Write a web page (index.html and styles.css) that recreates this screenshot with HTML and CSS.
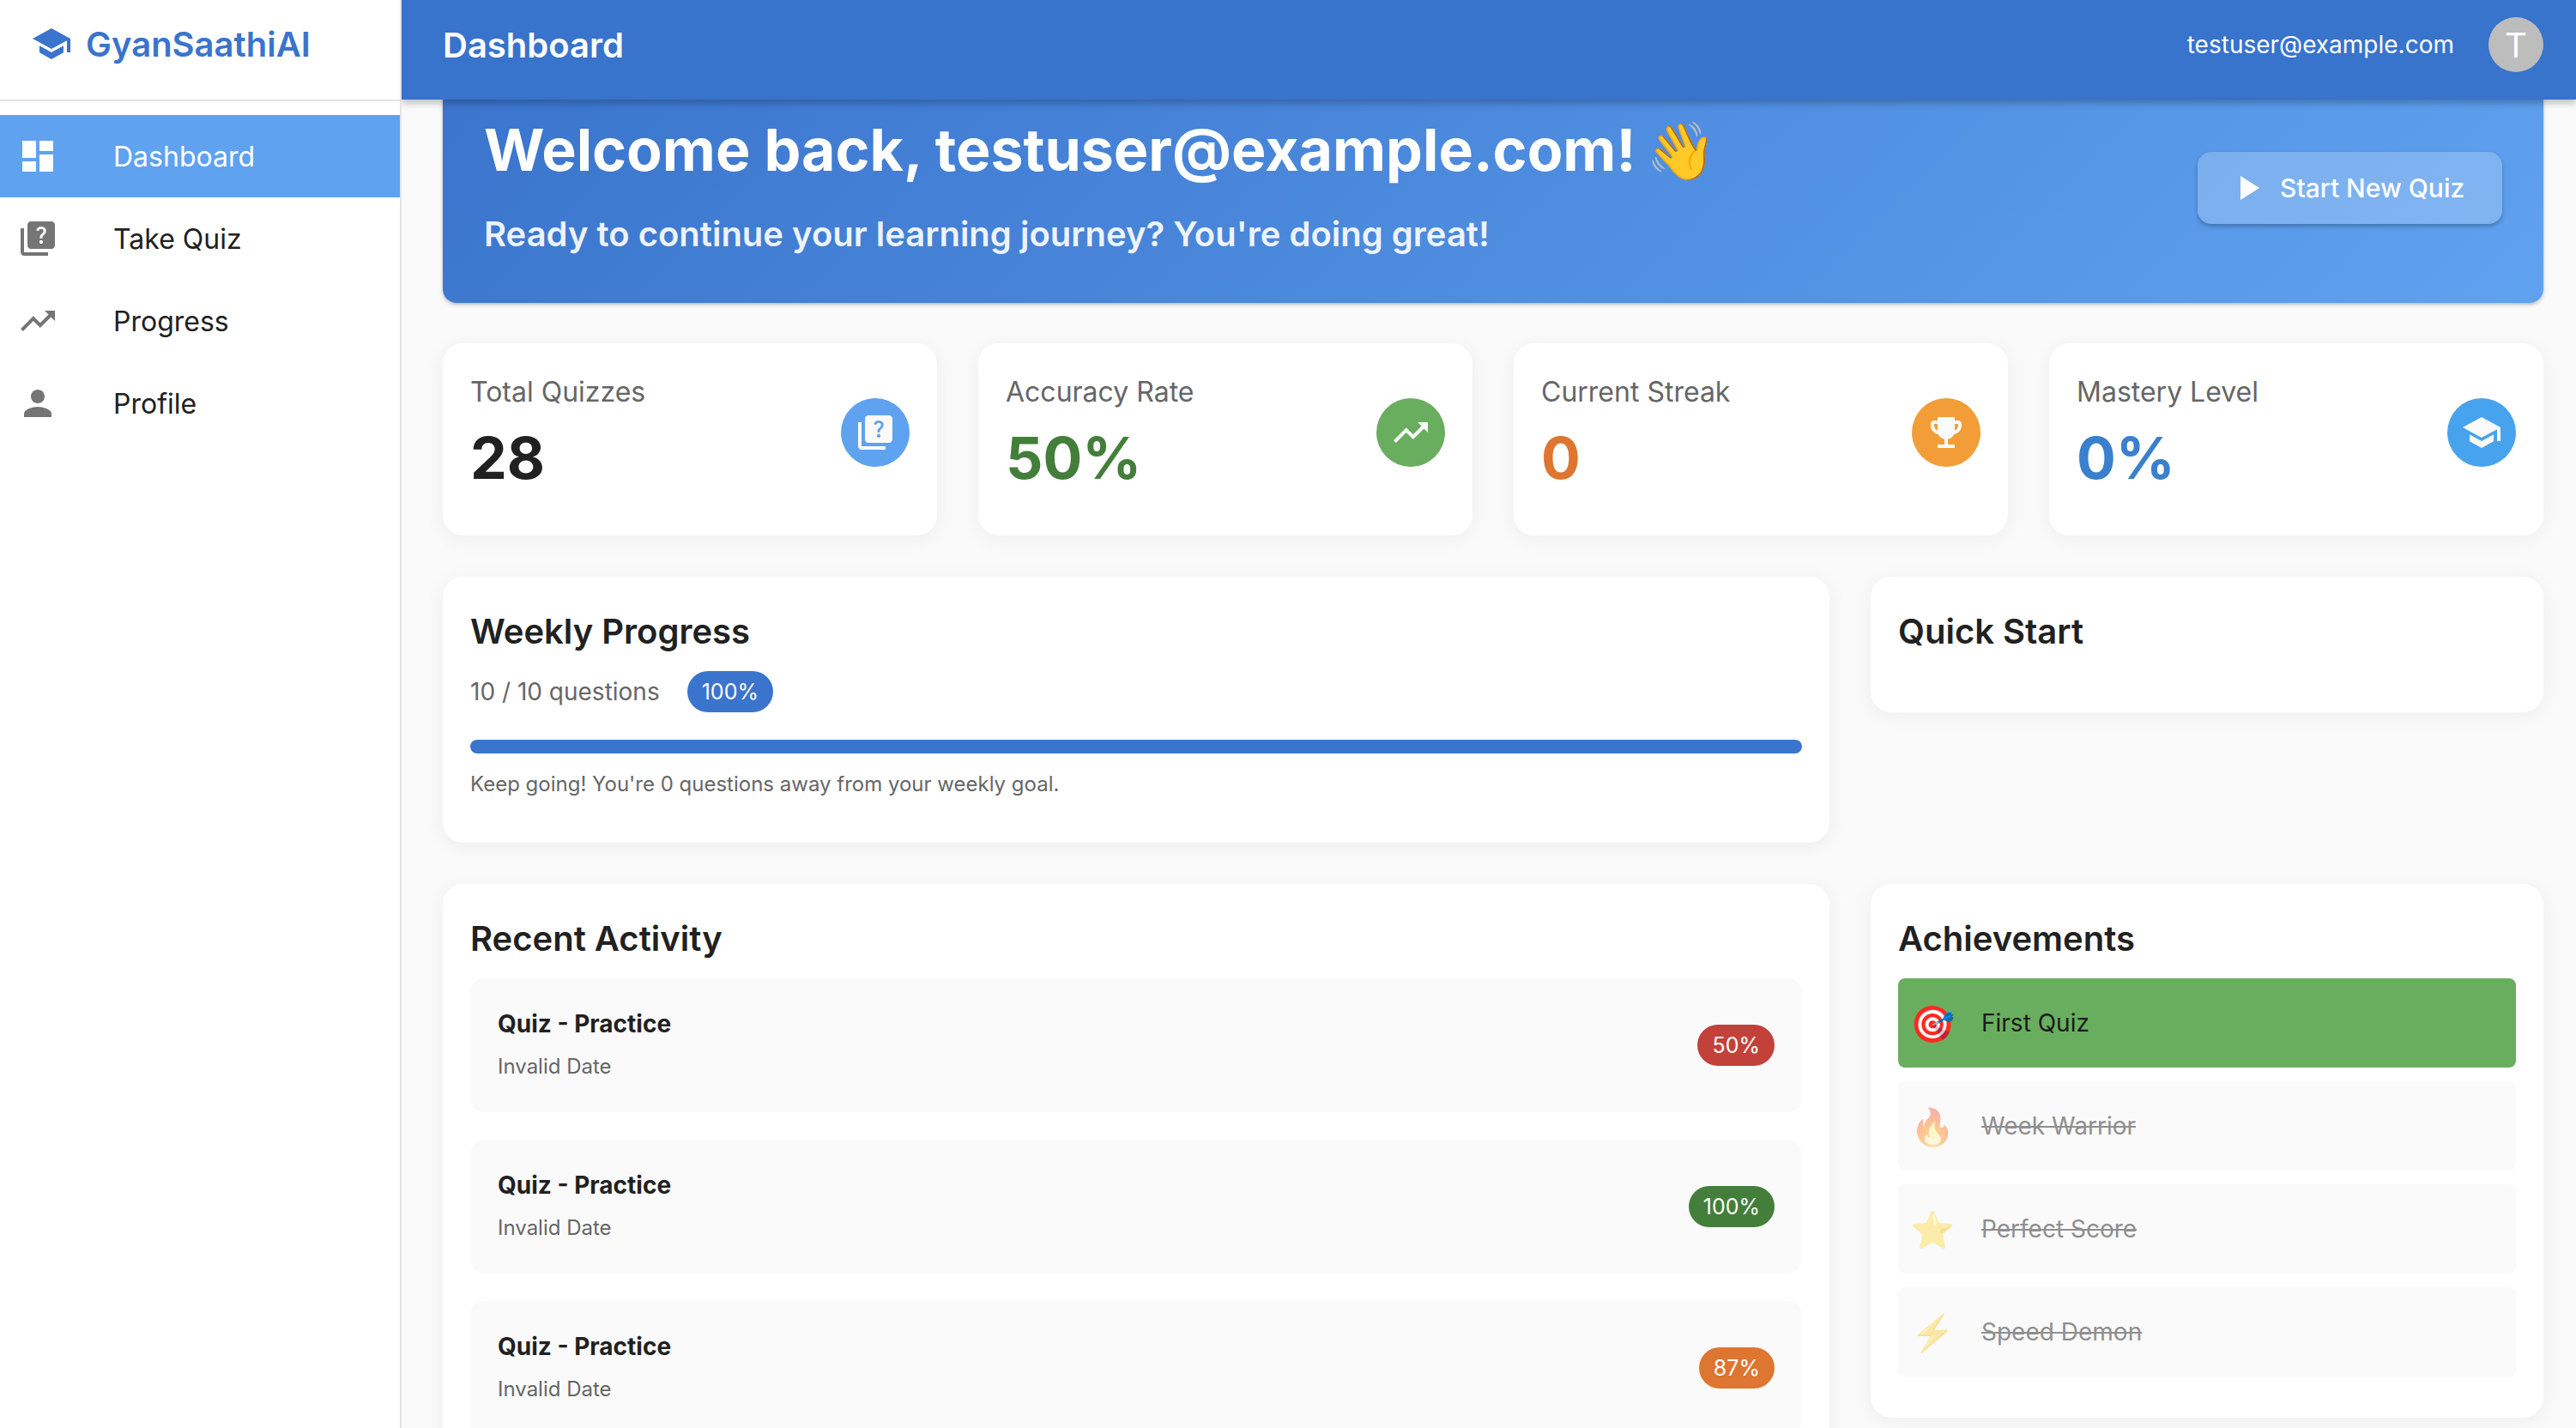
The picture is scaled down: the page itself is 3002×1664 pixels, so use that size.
FILE: index.html
```html
<!DOCTYPE html>
<html lang="en">
<head>
<meta charset="utf-8">
<title>GyanSaathiAI</title>
<link rel="stylesheet" href="styles.css">
</head>
<body>
<svg class="defs" width="0" height="0" aria-hidden="true">
  <defs>
    <symbol id="i-school" viewBox="0 0 24 24"><path d="M5 13.18v4L12 21l7-3.82v-4L12 17l-7-3.82zM12 3 1 9l11 6 9-4.91V17h2V9L12 3z"/></symbol>
    <symbol id="i-dash" viewBox="0 0 24 24"><path d="M3 13h8V3H3v10zm0 8h8v-6H3v6zm10 0h8V11h-8v10zm0-18v6h8V3h-8z"/></symbol>
    <symbol id="i-quiz" viewBox="0 0 24 24"><path d="M4 6H2v14c0 1.1.9 2 2 2h14v-2H4V6zm16-4H8c-1.1 0-2 .9-2 2v12c0 1.1.9 2 2 2h12c1.1 0 2-.9 2-2V4c0-1.1-.9-2-2-2zm-5.99 13c-.59 0-1.05-.47-1.05-1.05 0-.59.47-1.04 1.05-1.04.59 0 1.04.45 1.04 1.04-.01.58-.45 1.05-1.04 1.05zm2.5-6.17c-.63.93-1.23 1.21-1.56 1.81-.13.24-.18.4-.18 1.18h-1.52c0-.41-.06-1.08.26-1.65.41-.73 1.18-1.16 1.63-1.8.48-.68.21-1.94-1.14-1.94-.88 0-1.32.67-1.5 1.23l-1.37-.57C11.51 5.96 12.52 5 13.99 5c1.23 0 2.08.56 2.51 1.26.37.61.58 1.73.01 2.57z"/></symbol>
    <symbol id="i-trend" viewBox="0 0 24 24"><path d="M16 6l2.29 2.29-4.88 4.88-4-4L2 16.59 3.41 18l6-6 4 4 6.3-6.29L22 12V6z"/></symbol>
    <symbol id="i-person" viewBox="0 0 24 24"><path d="M12 12c2.21 0 4-1.79 4-4s-1.79-4-4-4-4 1.79-4 4 1.79 4 4 4zm0 2c-2.67 0-8 1.34-8 4v2h16v-2c0-2.66-5.33-4-8-4z"/></symbol>
    <symbol id="i-trophy" viewBox="0 0 24 24"><path d="M19 5h-2V3H7v2H5c-1.1 0-2 .9-2 2v1c0 2.55 1.92 4.63 4.39 4.94.63 1.5 1.98 2.63 3.61 2.96V19H7v2h10v-2h-4v-3.1c1.63-.33 2.98-1.46 3.61-2.96C19.08 12.63 21 10.55 21 8V7c0-1.1-.9-2-2-2zM5 8V7h2v3.82C5.84 10.4 5 9.3 5 8zm14 0c0 1.3-.84 2.4-2 2.82V7h2v1z"/></symbol>
    <symbol id="i-play" viewBox="0 0 24 24"><path d="M8 5v14l11-7z"/></symbol>
  </defs>
</svg>
<div class="app">
  <aside class="sidebar">
    <div class="brand">
      <svg class="icon brand-icon"><use href="#i-school"/></svg>
      <span class="brand-name">GyanSaathiAI</span>
    </div>
    <nav class="nav">
      <a class="nav-item active"><svg class="icon"><use href="#i-dash"/></svg><span>Dashboard</span></a>
      <a class="nav-item"><svg class="icon"><use href="#i-quiz"/></svg><span>Take Quiz</span></a>
      <a class="nav-item"><svg class="icon"><use href="#i-trend"/></svg><span>Progress</span></a>
      <a class="nav-item"><svg class="icon"><use href="#i-person"/></svg><span>Profile</span></a>
    </nav>
  </aside>
  <div class="main">
    <header class="topbar">
      <div class="topbar-title">Dashboard</div>
      <div class="topbar-user">
        <span class="user-email">testuser@example.com</span>
        <span class="avatar">T</span>
      </div>
    </header>
    <main class="content">
      <section class="hero">
        <div class="hero-text">
          <h1 class="hero-title">Welcome back, testuser@example.com! <span class="emoji">👋</span></h1>
          <p class="hero-sub">Ready to continue your learning journey? You're doing great!</p>
        </div>
        <button class="hero-btn"><svg class="icon"><use href="#i-play"/></svg><span>Start New Quiz</span></button>
      </section>

      <section class="stats">
        <div class="card stat">
          <div><div class="stat-label">Total Quizzes</div><div class="stat-value v-dark">28</div></div>
          <div class="stat-icon c-blue"><svg class="icon"><use href="#i-quiz"/></svg></div>
        </div>
        <div class="card stat">
          <div><div class="stat-label">Accuracy Rate</div><div class="stat-value v-green">50%</div></div>
          <div class="stat-icon c-green"><svg class="icon"><use href="#i-trend"/></svg></div>
        </div>
        <div class="card stat">
          <div><div class="stat-label">Current Streak</div><div class="stat-value v-orange">0</div></div>
          <div class="stat-icon c-orange"><svg class="icon"><use href="#i-trophy"/></svg></div>
        </div>
        <div class="card stat">
          <div><div class="stat-label">Mastery Level</div><div class="stat-value v-blue">0%</div></div>
          <div class="stat-icon c-sky"><svg class="icon"><use href="#i-school"/></svg></div>
        </div>
      </section>

      <section class="panels">
        <div class="card panel weekly">
          <h2 class="panel-title">Weekly Progress</h2>
          <div class="weekly-row">
            <span class="weekly-count">10 / 10 questions</span>
            <span class="chip chip-primary">100%</span>
          </div>
          <div class="bar"><div class="bar-fill"></div></div>
          <p class="weekly-note">Keep going! You're 0 questions away from your weekly goal.</p>
        </div>
        <div class="card panel quick">
          <h2 class="panel-title">Quick Start</h2>
        </div>
        <div class="card panel recent">
          <h2 class="panel-title">Recent Activity</h2>
          <div class="activity-list">
            <div class="activity">
              <div><div class="activity-name">Quiz - Practice</div><div class="activity-date">Invalid Date</div></div>
              <span class="chip chip-red">50%</span>
            </div>
            <div class="activity">
              <div><div class="activity-name">Quiz - Practice</div><div class="activity-date">Invalid Date</div></div>
              <span class="chip chip-green">100%</span>
            </div>
            <div class="activity">
              <div><div class="activity-name">Quiz - Practice</div><div class="activity-date">Invalid Date</div></div>
              <span class="chip chip-orange">87%</span>
            </div>
          </div>
        </div>
        <div class="card panel achievements">
          <h2 class="panel-title">Achievements</h2>
          <div class="ach-list">
            <div class="ach earned"><span class="ach-emoji">🎯</span><span class="ach-name">First Quiz</span></div>
            <div class="ach"><span class="ach-emoji">🔥</span><span class="ach-name">Week Warrior</span></div>
            <div class="ach"><span class="ach-emoji">⭐</span><span class="ach-name">Perfect Score</span></div>
            <div class="ach"><span class="ach-emoji">⚡</span><span class="ach-name">Speed Demon</span></div>
          </div>
        </div>
      </section>
    </main>
  </div>
</div>
</body>
</html>
```
FILE: styles.css
```css
* { box-sizing: border-box; }
html, body { margin: 0; height: 100%; overflow: hidden; }
body { font-family: Inter, "Noto Sans", sans-serif; background: #fafafa; color: #212121; }
.defs { position: absolute; }
.icon { width: 48px; height: 48px; fill: currentColor; flex: none; display: block; }

.app { display: flex; height: 100vh; }

.sidebar { width: 468px; flex: none; background: #fff; border-right: 2px solid #e4e4e4; }
.brand { height: 118px; display: flex; align-items: center; padding: 0 0 14px 36px; gap: 16px; border-bottom: 2px solid #e4e4e4; color: #3a74cc; }
.brand-name { font-size: 40px; font-weight: 600; }
.nav { padding-top: 16px; }
.nav-item { height: 96px; display: flex; align-items: center; padding-left: 20px; gap: 64px; font-size: 32px; color: #212121; }
.nav-item .icon { color: #757575; }
.nav-item.active { background: #5fa2f0; color: #fff; }
.nav-item.active .icon { color: #fff; }

.main { flex: 1; min-width: 0; display: flex; flex-direction: column; overflow: hidden; }
.topbar { height: 116px; flex: none; position: relative; z-index: 2; display: flex; align-items: center; justify-content: space-between; padding: 0 38px 12px 48px; background: #3873cc; color: #fff; box-shadow: 0 4px 8px rgba(0,0,0,.25); }
.topbar-title { font-size: 40px; font-weight: 600; }
.topbar-user { display: flex; align-items: center; gap: 40px; }
.user-email { font-size: 28px; }
.avatar { width: 64px; height: 64px; border-radius: 50%; background: #bdbdbd; color: #fff; font-size: 40px; display: flex; align-items: center; justify-content: center; }

.content { margin-top: -32px; padding: 0 38px 0 48px; }

.hero { height: 269px; padding: 48px 48px 0 48px; border-radius: 16px; background: linear-gradient(135deg, #3a74cc, #5fa2f0); color: #fff; display: flex; justify-content: space-between; box-shadow: 0 2px 4px rgba(0,0,0,.25); }
.hero-title { margin: 0; font-size: 68px; line-height: 84px; font-weight: 700; }
.emoji { font-size: 66px; margin-left: -4px; }
.hero-sub { margin: 28px 0 0; font-size: 40px; line-height: 56px; font-weight: 600; color: rgba(255,255,255,.92); }
.hero-btn { align-self: center; margin-top: -48px; width: 355px; height: 84px; border: 0; border-radius: 16px; background: rgba(255,255,255,.22); color: #fff; font: 500 30px Inter, sans-serif; display: flex; align-items: center; padding: 0 0 0 34px; gap: 14px; box-shadow: 0 3px 5px rgba(0,0,0,.25); }

.card { background: #fff; border-radius: 24px; box-shadow: 0 4px 24px rgba(0,0,0,.05); }

.stats { display: grid; grid-template-columns: repeat(4, 1fr); gap: 48px; margin-top: 47px; }
.stat { height: 224px; padding: 32px 32px 48px 32px; display: flex; justify-content: space-between; align-items: center; }
.stat-label { font-size: 32px; line-height: 48px; color: #666; margin-top: 1px; }
.stat-value { font-size: 68px; line-height: 88px; font-weight: 700; margin-top: 8px; }
.v-dark { color: #212121; }
.v-green { color: #437e3a; }
.v-orange { color: #de7530; }
.v-blue { color: #3a80cc; }
.stat-icon { width: 80px; height: 80px; border-radius: 50%; color: #fafafa; display: flex; align-items: center; justify-content: center; }
.c-blue { background: #5fa2f0; }
.c-green { background: #69ae5e; }
.c-orange { background: #f29d38; }
.c-sky { background: #47a3ee; }

.panels { display: grid; grid-template-columns: minmax(0, 1fr) 784px; gap: 48px; align-items: start; margin-top: 48px; }
.panel { padding: 32px; }
.panel-title { margin: -1px 0 13px; font-size: 40px; line-height: 66px; font-weight: 600; color: #212121; }

.weekly { height: 310px; }
.weekly-row { display: flex; align-items: center; gap: 32px; }
.weekly-count { font-size: 28px; color: #666; }
.chip { display: inline-flex; align-items: center; height: 48px; padding: 0 17px; border-radius: 24px; color: #fff; font-size: 25px; flex: none; }
.chip-primary { background: #3a74cc; }
.chip-red { background: #c3413b; }
.chip-green { background: #437e3a; }
.chip-orange { background: #de7530; }
.bar { height: 16px; border-radius: 8px; background: #3a74cc; margin-top: 32px; overflow: hidden; }
.bar-fill { height: 100%; width: 100%; background: #3a74cc; }
.weekly-note { margin: 18px 0 0; font-size: 24px; line-height: 36px; color: #666; }

.quick { height: 158px; }

.recent { height: 680px; }
.activity-list { display: flex; flex-direction: column; gap: 32px; }
.activity { height: 156px; flex: none; border-radius: 16px; background: #fafafa; padding: 30px 32px 34px 32px; display: flex; justify-content: space-between; align-items: center; }
.activity .chip { position: relative; top: 2px; }
.activity-name { font-size: 28px; line-height: 44px; font-weight: 700; color: #212121; }
.activity-date { font-size: 24px; line-height: 36px; color: #666; margin-top: 10px; }

.achievements { height: 622px; }
.ach-list { display: flex; flex-direction: column; gap: 16px; }
.ach { height: 104px; border-radius: 8px; background: #fafafa; display: flex; align-items: center; padding-left: 14px; color: #8f8f8f; }
.ach-emoji { width: 48px; font-size: 42px; text-align: center; margin-right: 35px; opacity: .4; flex: none; }
.ach-name { font-size: 28px; text-decoration: line-through; }
.ach.earned { background: #69ae5e; color: #1a1a1a; }
.ach.earned .ach-emoji { opacity: 1; }
.ach.earned .ach-name { text-decoration: none; }
```
